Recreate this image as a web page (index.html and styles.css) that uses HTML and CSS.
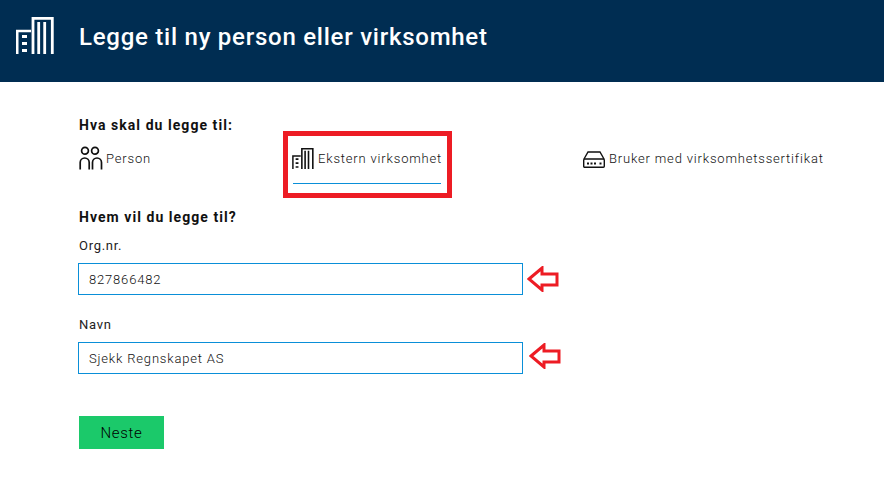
FILE: index.html
```html
<!DOCTYPE html>
<html lang="en">
<head>
    <meta charset="UTF-8">
    <meta name="viewport" content="width=device-width, initial-scale=1.0">
    <title>Legge til ny person eller virksomhet</title>
    <link rel="stylesheet" href="styles.css">
</head>
<body>
    <header class="top-bar">
        <svg class="top-icon" viewBox="0 0 38 37" fill="none" stroke="#fff">
            <path d="M1.200 37V14H15" stroke-width="2.600"/>
            <path d="M17 37V1.400H36.300V37" stroke-width="2.800"/>
            <path d="M22.700 5V37M28.700 5V37" stroke-width="2.800"/>
            <path d="M6 18h5v3H6zM6 25h5v3H6zM6 32h5v3H6z" fill="#fff" stroke="none"/>
        </svg>
        <h1>Legge til ny person eller virksomhet</h1>
    </header>

    <main class="content">
        <h2 class="section-title">Hva skal du legge til:</h2>
        <div class="type-row">
            <div class="type-option type-person">
                <svg class="type-icon" width="24" height="24" viewBox="0 0 24 24" fill="none" stroke="#111" stroke-width="1.700">
                    <circle cx="6" cy="4.700" r="3.400"/>
                    <circle cx="16" cy="4.700" r="3.400"/>
                    <path d="M1.200 23.500V16.500a4.500 4.500 0 0 1 9 0V23.500"/>
                    <path d="M13.500 23.500V16.500a4.500 4.500 0 0 1 9 0V23.500"/>
                </svg>
                <span>Person</span>
            </div>
            <div class="type-option type-company">
                <svg class="type-icon" width="22" height="21" viewBox="0 0 38 37" fill="none" stroke="#111">
                    <path d="M1.200 37V14H15" stroke-width="2.600"/>
                    <path d="M17 37V1.400H36.300V37" stroke-width="2.800"/>
                    <path d="M22.700 5V37M28.700 5V37" stroke-width="2.800"/>
                    <path d="M6 18h5v3H6zM6 25h5v3H6zM6 32h5v3H6z" fill="#111" stroke="none"/>
                </svg>
                <span>Ekstern virksomhet</span>
            </div>
            <div class="type-option type-cert">
                <svg class="type-icon cert-icon" width="22" height="17" viewBox="0 0 22 17" fill="none" stroke="#111" stroke-width="1.400">
                    <path d="M1 8L5 1H17L21 8"/>
                    <rect x="0.700" y="8" width="20.600" height="8.300" rx="1"/>
                    <path d="M4 12.500h2M7.500 12.500h2M11 12.500h2M16.500 12.500h2" stroke-width="2"/>
                </svg>
                <span>Bruker med virksomhetssertifikat</span>
            </div>
        </div>

        <h2 class="section-title who-title">Hvem vil du legge til?</h2>
        <div class="field">
            <label for="orgnr">Org.nr.</label>
            <input id="orgnr" type="text" value="827866482">
        </div>
        <div class="field">
            <label for="navn">Navn</label>
            <input id="navn" type="text" value="Sjekk Regnskapet AS">
        </div>
        <button class="next-btn">Neste</button>
    </main>

    <!-- red markings drawn on top of the screenshot -->
    <div class="mark-box"></div>
    <svg class="mark-arrow arrow-one" width="32" height="26" viewBox="0 0 32 26">
        <path d="M2 13L15 2V8H30V19H15V24Z" fill="#fff" stroke="#ed1c24" stroke-width="3"/>
    </svg>
    <svg class="mark-arrow arrow-two" width="32" height="26" viewBox="0 0 32 26">
        <path d="M2 13L15 2V8H30V19H15V24Z" fill="#fff" stroke="#ed1c24" stroke-width="3"/>
    </svg>
</body>
</html>
```

FILE: styles.css
```css
body {
    font-family: Roboto, 'Liberation Sans', sans-serif;
    margin: 0;
    background-color: #fff;
    color: #222;
    position: relative;
    overflow: hidden;
    height: 486px;
}

/* Top bar */
.top-bar {
    display: flex;
    align-items: center;
    height: 82px;
    padding-left: 16px;
    background-color: #002d52;
    box-sizing: border-box;
}

.top-icon {
    width: 38px;
    height: 37px;
    margin-right: 25px;
    margin-top: -11px;
}

.top-bar h1 {
    margin: -9px 0 0;
    font-size: 24px;
    font-weight: 500;
    letter-spacing: 0.75px;
    color: #fff;
}

/* Form */
.content {
    padding: 35px 0 0 79px;
}

.section-title {
    margin: 0;
    font-size: 14px;
    line-height: 17px;
    font-weight: 700;
    letter-spacing: 1.05px;
    color: #111;
}

.type-row {
    display: flex;
    align-items: center;
    height: 30px;
    margin-top: 9px;
    font-size: 13px;
    font-weight: 300;
    letter-spacing: 0.82px;
    color: #111;
}

.type-option {
    display: flex;
    align-items: center;
    gap: 4px;
}

.type-person {
    width: 213px;
    gap: 3px;
}

.type-company {
    width: 291px;
}

.cert-icon {
    margin-top: 3px;
}

.who-title {
    margin-top: 36px;
}

.field {
    margin-top: 12px;
}

.field + .field {
    margin-top: 22px;
}

.field label {
    display: block;
    margin-bottom: 10px;
    font-size: 13px;
    font-weight: 400;
    line-height: 15px;
    letter-spacing: 0.72px;
    color: #222;
}

.field input {
    display: block;
    width: 445px;
    height: 32px;
    margin-left: -1px;
    padding: 0 10px;
    box-sizing: border-box;
    border: 1px solid #0a8fd8;
    outline: none;
    font-family: inherit;
    font-size: 13px;
    font-weight: 300;
    letter-spacing: 0.82px;
    color: #111;
}

.next-btn {
    display: block;
    width: 85px;
    height: 33px;
    margin-top: 42px;
    padding: 0;
    border: none;
    background-color: #1bc96a;
    font-family: inherit;
    font-size: 15px;
    font-weight: 300;
    letter-spacing: 0.7px;
    color: #000;
}

/* Red markings */
.mark-box {
    position: absolute;
    left: 283px;
    top: 131px;
    width: 159px;
    height: 57px;
    border: 5px solid #ed1c24;
}

.mark-box::after {
    content: '';
    position: absolute;
    left: 5px;
    right: 6px;
    bottom: 9px;
    height: 1px;
    background-color: #0a8fd8;
}

.mark-arrow {
    position: absolute;
}

.arrow-one {
    left: 527px;
    top: 266px;
}

.arrow-two {
    left: 529px;
    top: 343px;
}
```
